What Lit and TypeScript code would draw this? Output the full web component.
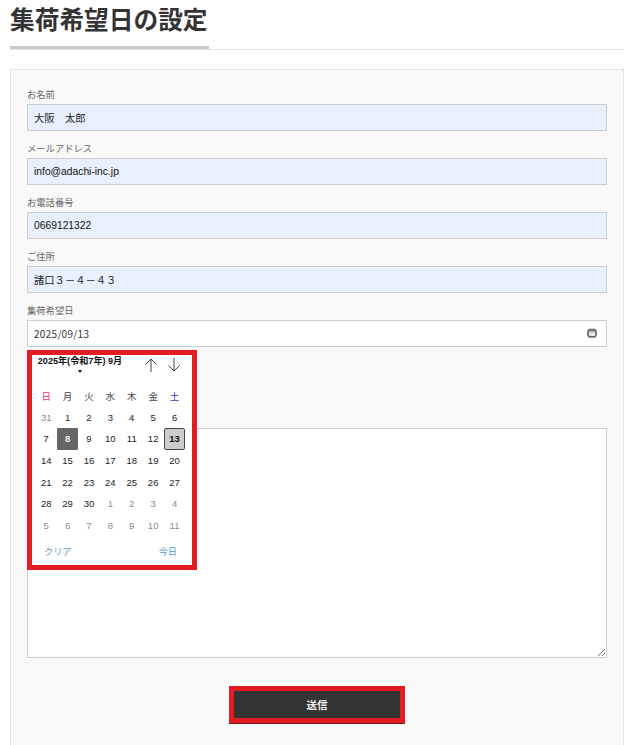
import { LitElement, html, css, svg } from "lit";
import { customElement } from "lit/decorators.js";

const weekdays = [
  { t: "日", c: "sun" },
  { t: "月", c: "" },
  { t: "火", c: "" },
  { t: "水", c: "" },
  { t: "木", c: "" },
  { t: "金", c: "" },
  { t: "土", c: "sat" },
];

const days: { d: number; muted?: boolean; today?: boolean; sel?: boolean }[] = [
  { d: 31, muted: true },
  ...Array.from({ length: 30 }, (_, i) => ({ d: i + 1, today: i + 1 === 8, sel: i + 1 === 13 })),
  ...Array.from({ length: 11 }, (_, i) => ({ d: i + 1, muted: true })),
];

const arrowUp = svg`<path d="M8 15V2M2.500 7.500 8 2l5.500 5.500" fill="none" stroke="#444" stroke-width="1"/>`;
const arrowDown = svg`<path d="M8 1v13M2.500 8.500 8 14l5.500-5.500" fill="none" stroke="#444" stroke-width="1"/>`;

@customElement("app-root")
export class AppRoot extends LitElement {
  static styles = css`
    :host {
      display: block;
      width: 640px;
      height: 745px;
      overflow: hidden;
      background: #fff;
      font-family: "Liberation Sans", "Noto Sans CJK JP", sans-serif;
      color: #333;
    }
    * { box-sizing: border-box; }
    .head {
      margin: 0 16px 0 10px;
      height: 50px;
      border-bottom: 1px solid #e3e3e3;
    }
    .head h1 {
      margin: 0;
      width: 199px;
      height: 49px;
      font-size: 24.700px;
      line-height: 36px;
      font-weight: 700;
      color: #333;
      white-space: nowrap;
      border-bottom: 3px solid #c9c9c9;
      font-family: "Noto Sans CJK JP", sans-serif;
    }
    .panel {
      margin: 19px 16px 0 10px;
      height: 700px;
      background: #f9f9f9;
      border: 1px solid #e3e3e3;
      padding: 18px 16px 0;
    }
    .field { display: flex; flex-direction: column; height: 54px; }
    .field label {
      font-size: 9.300px;
      line-height: 12px;
      height: 16px;
      color: #666;
      font-family: "Noto Sans CJK JP", sans-serif;
    }
    .input {
      display: flex;
      align-items: center;
      justify-content: space-between;
      height: 27px;
      padding: 0 6px 1px;
      border: 1px solid #ccc;
      background: #e8f0fe;
      font-size: 10.300px;
      color: #111;
      white-space: pre;
    }
    .ja { font-family: "Noto Sans CJK JP", sans-serif; color: #222; }
    .date {
      background: #fff;
      font-family: "Noto Sans CJK JP", sans-serif;
      font-size: 10px;
      color: #333;
      padding-right: 9px;
      letter-spacing: 0.300px;
    }
    .date svg { display: block; width: 10px; height: 10px; }
    .picker-wrap { position: relative; }
    .calendar {
      position: absolute;
      left: 0;
      top: 30px;
      width: 170px;
      height: 220px;
      background: #fff;
      border: 5px solid #e31b23;
      z-index: 2;
      display: flex;
      flex-direction: column;
    }
    .cal-top {
      display: flex;
      height: 29px;
      padding: 0 0 0 5px;
      justify-content: space-between;
    }
    .cal-month {
      display: flex;
      flex-direction: column;
      align-items: center;
      width: 86px;
      font-size: 9.100px;
      font-weight: 700;
      color: #111;
      line-height: 12px;
      white-space: nowrap;
    }
    .caret {
      margin-top: 3px;
      width: 0;
      height: 0;
      border-left: 2.500px solid transparent;
      border-right: 2.500px solid transparent;
      border-top: 3px solid #111;
    }
    .arrows { display: flex; gap: 7px; padding: 2px 10px 0 0; }
    .arrows svg { display: block; width: 16px; height: 16px; }
    .grid {
      display: grid;
      grid-template-columns: repeat(7, 21.400px);
      grid-auto-rows: 21.600px;
      padding-left: 3.500px;
      margin-top: 1px;
    }
    .cell {
      display: flex;
      align-items: center;
      justify-content: center;
      font-size: 9.500px;
      color: #222;
    }
    .wd { font-family: "Noto Sans CJK JP", sans-serif; font-size: 9.500px; color: #444; }
    .sun { color: #d8365f; }
    .sat { color: #3a3ab8; }
    .muted { color: #8a8a8a; }
    .today { background: #666; color: #eee; border-radius: 1px; font-weight: 700; }
    .sel { background: #ccc; border: 1px solid #444; border-radius: 2px; color: #111; font-weight: 700; }
    .cal-foot {
      display: flex;
      justify-content: space-between;
      font-family: "Noto Sans CJK JP", sans-serif;
      font-size: 9.200px;
      color: #5b9ac4;
      padding: 8px 15px 0 12px;
    }
    textarea {
      display: block;
      width: 100%;
      height: 230px;
      margin-top: 70px;
      border: 1px solid #ccc;
      background: #fff;
      padding: 0;
      outline: none;
      border-radius: 0;
    }
    .actions { display: flex; justify-content: center; margin-top: 28px; }
    button {
      width: 176px;
      height: 37px;
      background: #333;
      border: 5px solid #e31b23;
      color: #eee;
      font-family: "Noto Sans CJK JP", sans-serif;
      font-size: 10.500px;
      font-weight: 700;
      padding: 0;
      box-shadow: 0 1px 0 #7a1a1e;
    }
  `;

  render() {
    return html`
      <div class="head"><h1>集荷希望日の設定</h1></div>
      <div class="panel">
        <div class="field"><label>お名前</label><div class="input ja">大阪　太郎</div></div>
        <div class="field"><label>メールアドレス</label><div class="input">info@adachi-inc.jp</div></div>
        <div class="field"><label>お電話番号</label><div class="input">0669121322</div></div>
        <div class="field"><label>ご住所</label><div class="input ja">諸口３－４－４３</div></div>
        <div class="field"><label>集荷希望日</label>
          <div class="picker-wrap">
            <div class="input date">
              <span>2025/09/13</span>
              <svg viewBox="0 0 10 10"><rect x="0.700" y="1.200" width="8.600" height="8" rx="2" fill="#777" stroke="#666"/><rect x="2" y="3.500" width="6" height="4.500" fill="#ddd"/><rect x="5.500" y="5.500" width="2" height="2" fill="#fff"/></svg>
            </div>
            <div class="calendar">
              <div class="cal-top">
                <div class="cal-month"><span>2025年(令和7年) 9月</span><span class="caret"></span></div>
                <div class="arrows">
                  <svg viewBox="0 0 16 16">${arrowUp}</svg>
                  <svg viewBox="0 0 16 16">${arrowDown}</svg>
                </div>
              </div>
              <div class="grid">
                ${weekdays.map((w) => html`<div class="cell wd ${w.c}">${w.t}</div>`)}
                ${days.map(
                  (x) => html`<div class="cell ${x.muted ? "muted" : ""} ${!x.muted && x.today ? "today" : ""} ${!x.muted && x.sel ? "sel" : ""}">${x.d}</div>`
                )}
              </div>
              <div class="cal-foot"><span>クリア</span><span>今日</span></div>
            </div>
          </div>
        </div>
        <textarea></textarea>
        <div class="actions"><button>送信</button></div>
      </div>
    `;
  }
}
